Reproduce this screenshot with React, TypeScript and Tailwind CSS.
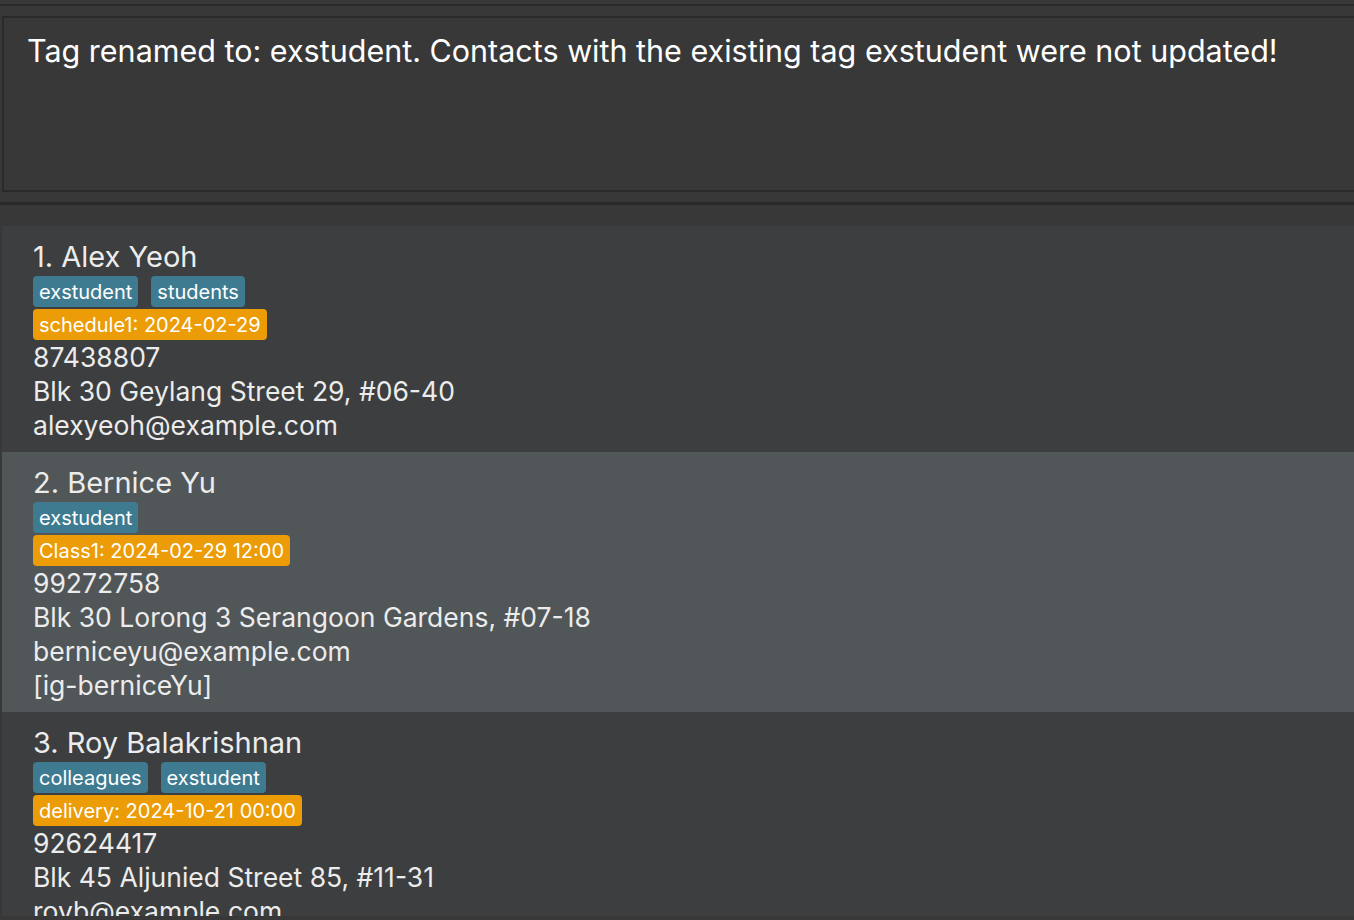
import React from "react";

type Person = {
  name: string;
  tags: string[];
  schedule: string;
  phone: string;
  address: string;
  email: string;
  social?: string;
};

const PEOPLE: Person[] = [
  {
    name: "Alex Yeoh",
    tags: ["exstudent", "students"],
    schedule: "schedule1: 2024-02-29",
    phone: "87438807",
    address: "Blk 30 Geylang Street 29, #06-40",
    email: "alexyeoh@example.com",
  },
  {
    name: "Bernice Yu",
    tags: ["exstudent"],
    schedule: "Class1: 2024-02-29 12:00",
    phone: "99272758",
    address: "Blk 30 Lorong 3 Serangoon Gardens, #07-18",
    email: "berniceyu@example.com",
    social: "[ig-berniceYu]",
  },
  {
    name: "Roy Balakrishnan",
    tags: ["colleagues", "exstudent"],
    schedule: "delivery: 2024-10-21 00:00",
    phone: "92624417",
    address: "Blk 45 Aljunied Street 85, #11-31",
    email: "royb@example.com",
  },
];

const PersonCard = ({ person, index, selected }: { person: Person; index: number; selected: boolean }) => (
  <li className={`pl-[31px] pt-[14px] pb-[10px] ${selected ? "bg-[#515658]" : "bg-[#3c3e3f]"}`}>
    <div className="text-[29px] leading-[34px] text-[#ececec]">
      {index + 1}. {person.name}
    </div>
    <div className="flex gap-[13px] mt-[2px]">
      {person.tags.map((t) => (
        <span key={t} className="h-[31px] px-[6px] rounded-[4px] bg-[#3e7b91] text-white text-[20px] leading-[32px]">
          {t}
        </span>
      ))}
    </div>
    <div className="flex mt-[2px]">
      <span className="h-[31px] px-[6px] rounded-[4px] bg-[#eb9c06] text-white text-[20px] leading-[32px]">
        {person.schedule}
      </span>
    </div>
    <div className="text-[26.5px] leading-[34px] text-[#ececec]">
      <div>{person.phone}</div>
      <div>{person.address}</div>
      <div>{person.email}</div>
      {person.social && <div>{person.social}</div>}
    </div>
  </li>
);

export default function App() {
  return (
    <div className="h-[920px] overflow-hidden bg-[#383838] font-['Inter',sans-serif]">
      <div className="pt-[4px]">
        <div className="h-[2px] bg-[#2a2a2a]" />
        <div className="pt-[10px] pl-[2px] pb-[10px]">
          <div className="h-[176px] -mr-[4px] border-2 border-[#2a2a2a] bg-[#383838] pl-[23px] pt-[14px]">
            <p className="text-[30.5px] leading-[38px] text-white whitespace-nowrap">
              Tag renamed to: exstudent. Contacts with the existing tag exstudent were not updated!
            </p>
          </div>
        </div>
        <div className="h-[3px] bg-[#2a2a2a]" />
        <div className="pt-[21px] pl-[2px]">
          {/* list viewport: ends a few px above the window bottom */}
          <ul className="flex flex-col h-[690px] overflow-hidden">
            {PEOPLE.map((p, i) => (
              <PersonCard key={p.name} person={p} index={i} selected={i === 1} />
            ))}
          </ul>
        </div>
      </div>
    </div>
  );
}
